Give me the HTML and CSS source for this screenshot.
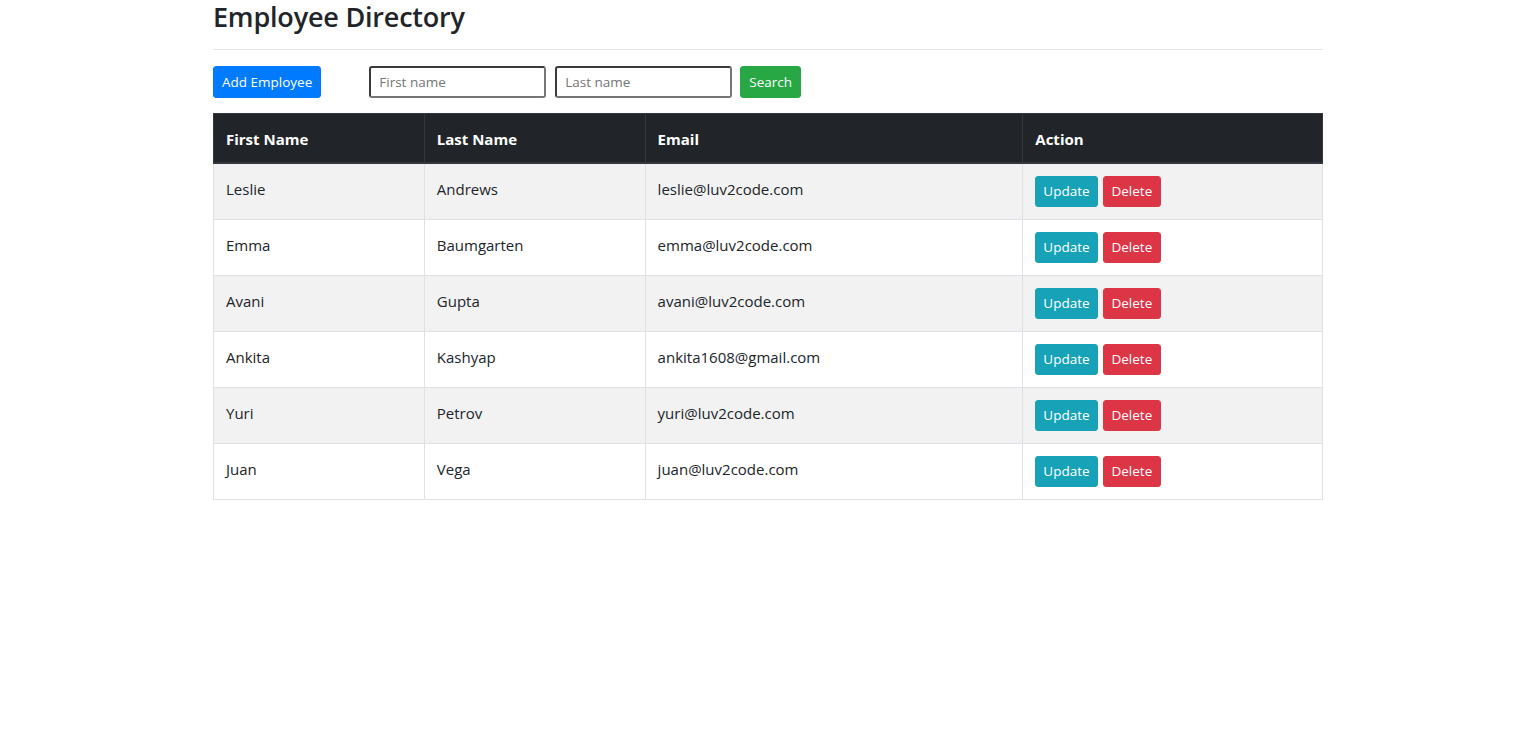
FILE: index.html
```html
<!DOCTYPE html>
<html lang="en">
<head>
<meta charset="utf-8">
<title>Employee Directory</title>
<link rel="stylesheet" href="styles.css">
</head>
<body>
<div class="container">
  <h3 class="title">Employee Directory</h3>
  <hr class="rule">
  <div class="toolbar">
    <button class="btn btn-sm btn-primary">Add Employee</button>
    <form class="search">
      <input class="field" type="text" placeholder="First name">
      <input class="field" type="text" placeholder="Last name">
      <button class="btn btn-sm btn-success" type="button">Search</button>
    </form>
  </div>
  <table class="table">
    <thead>
      <tr>
        <th class="c1">First Name</th>
        <th class="c2">Last Name</th>
        <th class="c3">Email</th>
        <th class="c4">Action</th>
      </tr>
    </thead>
    <tbody>
      <tr><td>Leslie</td><td>Andrews</td><td>leslie@luv2code.com</td><td class="actions"><button class="btn btn-sm btn-info">Update</button> <button class="btn btn-sm btn-danger">Delete</button></td></tr>
      <tr><td>Emma</td><td>Baumgarten</td><td>emma@luv2code.com</td><td class="actions"><button class="btn btn-sm btn-info">Update</button> <button class="btn btn-sm btn-danger">Delete</button></td></tr>
      <tr><td>Avani</td><td>Gupta</td><td>avani@luv2code.com</td><td class="actions"><button class="btn btn-sm btn-info">Update</button> <button class="btn btn-sm btn-danger">Delete</button></td></tr>
      <tr><td>Ankita</td><td>Kashyap</td><td>ankita1608@gmail.com</td><td class="actions"><button class="btn btn-sm btn-info">Update</button> <button class="btn btn-sm btn-danger">Delete</button></td></tr>
      <tr><td>Yuri</td><td>Petrov</td><td>yuri@luv2code.com</td><td class="actions"><button class="btn btn-sm btn-info">Update</button> <button class="btn btn-sm btn-danger">Delete</button></td></tr>
      <tr><td>Juan</td><td>Vega</td><td>juan@luv2code.com</td><td class="actions"><button class="btn btn-sm btn-info">Update</button> <button class="btn btn-sm btn-danger">Delete</button></td></tr>
    </tbody>
  </table>
</div>
</body>
</html>
```

FILE: styles.css
```css
* { box-sizing: border-box; }
html, body { margin: 0; padding: 0; background: #fff; }
body {
  font-family: "Open Sans", "Noto Sans", Arial, sans-serif;
  font-size: 15px;
  line-height: 1.5;
  color: #212529;
}
.container {
  width: 1140px;
  margin: 0 auto;
  padding: 0 15px;
}
.title {
  margin: 0 0 8px 0;
  font-size: 27px;
  font-weight: 600;
  line-height: 1.2;
  height: 33px;
  padding-top: 1px;
  letter-spacing: -0.2px;
}
.rule {
  margin: 16px 0;
  border: 0;
  border-top: 1px solid rgba(0,0,0,.1);
}
.toolbar {
  display: flex;
  align-items: flex-start;
  margin-bottom: 15px;
}
.search {
  display: flex;
  margin: 0 0 0 48px;
}
.btn {
  display: inline-block;
  font-family: inherit;
  font-weight: 400;
  text-align: center;
  border: 1px solid transparent;
  cursor: pointer;
  color: #fff;
}
.btn-sm {
  padding: 4px 7px;
  font-size: 13.5px;
  line-height: 21px;
  border-radius: 3px;
  height: 31px;
}
.toolbar .btn-sm { height: 32px; padding: 4px 8px; }
.btn-primary { background: #007bff; border-color: #007bff; }
.btn-success { background: #28a745; border-color: #28a745; }
.btn-info { background: #17a2b8; border-color: #17a2b8; }
.btn-danger { background: #dc3545; border-color: #dc3545; }
.actions .btn-danger { margin-left: 2px; padding: 4px 8px 4px 7px; }
.field {
  width: 177px;
  height: 32px;
  margin-right: 9px;
  padding: 1px 8px;
  font-family: inherit;
  font-size: 13.5px;
  color: #212529;
  border: 2px solid #767676;
  border-top-color: #3b3b3b;
  border-left-color: #3b3b3b;
  border-radius: 3px;
  background: #fff;
}
.field + .field { margin-right: 8px; }
.field::placeholder { color: #757575; }
.table {
  width: 1110px;
  border-collapse: collapse;
  color: #212529;
}
.table th, .table td {
  padding: 13px 12px 11px;
  line-height: 24px;
  vertical-align: top;
  border: 1px solid #dee2e6;
  text-align: left;
}
.table td.actions { padding: 12px; }
.table thead th {
  background: #212529;
  color: #fff;
  border-color: #32383e;
  font-weight: 700;
  border-bottom-width: 2px;
  vertical-align: bottom;
}
.table tbody tr:nth-child(odd) { background: #f2f2f2; }
.c1 { width: 211px; }
.c2 { width: 221px; }
.c3 { width: 378px; }
.c4 { width: 300px; }
```
